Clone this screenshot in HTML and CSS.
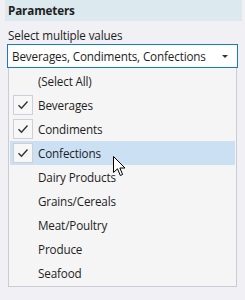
FILE: index.html
```html
<!DOCTYPE html>
<html lang="en">
<head>
    <meta charset="UTF-8">
    <title>Parameters</title>
    <link rel="stylesheet" href="styles.css">
</head>
<body>
<div class="panel">
    <div class="panel-title">Parameters</div>
    <div class="field-label">Select multiple values</div>
    <div class="select-box">
        <span class="select-text">Beverages, Condiments, Confections</span>
        <span class="select-arrow"></span>
    </div>
    <ul class="options">
        <li class="option"><span class="check empty"></span>(Select All)</li>
        <li class="option"><span class="check"><svg width="12" height="10" viewBox="0 0 12 10"><path d="M1.5 5.2 L4.5 8.2 L10.5 1.5" fill="none" stroke="#333" stroke-width="1.4"/></svg></span>Beverages</li>
        <li class="option"><span class="check"><svg width="12" height="10" viewBox="0 0 12 10"><path d="M1.5 5.2 L4.5 8.2 L10.5 1.5" fill="none" stroke="#333" stroke-width="1.4"/></svg></span>Condiments</li>
        <li class="option hover"><span class="check"><svg width="12" height="10" viewBox="0 0 12 10"><path d="M1.5 5.2 L4.5 8.2 L10.5 1.5" fill="none" stroke="#333" stroke-width="1.4"/></svg></span>Confections
            <svg class="cursor" width="14" height="21" viewBox="0 0 14 21"><path d="M0.5 0.5 L0.5 16.5 L4.5 12.8 L7.3 19.5 L9.6 18.5 L6.9 12 L12 12 Z" fill="#fff" stroke="#000" stroke-width="1"/></svg>
        </li>
        <li class="option"><span class="check empty"></span>Dairy Products</li>
        <li class="option"><span class="check empty"></span>Grains/Cereals</li>
        <li class="option"><span class="check empty"></span>Meat/Poultry</li>
        <li class="option"><span class="check empty"></span>Produce</li>
        <li class="option"><span class="check empty"></span>Seafood</li>
    </ul>
</div>
</body>
</html>
```
FILE: styles.css
```css
body {
    margin: 0;
    background-color: #f0f0f5;
    font-family: "Open Sans", "Noto Sans", sans-serif;
    font-size: 11.7px;
    letter-spacing: -0.15px;
    color: #1e1e1e;
}
.panel {
    width: 245px;
    height: 300px;
}
.panel-title {
    margin: 0 3px 0 5px;
    height: 21px;
    line-height: 21px;
    padding-left: 3px;
    background-color: #dce9ef;
    font-weight: bold;
    color: #1e1e1e;
}
.field-label {
    margin: 6px 0 0 8px;
    height: 17px;
    line-height: 17px;
}
.select-box {
    margin: 0 0 0 7px;
    width: 225px;
    height: 22px;
    border: 1px solid #1979ca;
    background-color: #fff;
    display: flex;
    align-items: center;
    padding-left: 4px;
    box-sizing: content-box;
}
.select-text {
    flex: 1;
}
.select-arrow {
    width: 0;
    height: 0;
    border-left: 3px solid transparent;
    border-right: 3px solid transparent;
    border-top: 3px solid #333;
    margin-right: 9px;
}
.options {
    list-style: none;
    margin: 0 0 0 8px;
    padding: 1px 1px;
    width: 225px;
    background-color: #f5f5f5;
    border: 1px solid #cbcbd6;
    border-top: none;
}
.option {
    height: 24px;
    display: flex;
    align-items: center;
    padding-left: 3px;
    position: relative;
}
.option.hover {
    background-color: #cce0f4;
}
.check {
    width: 18px;
    height: 18px;
    border: 1px solid #cfcfd8;
    background-color: #f7f7f7;
    margin-right: 5px;
    display: flex;
    align-items: center;
    justify-content: center;
}
.check.empty {
    visibility: hidden;
}
.cursor {
    position: absolute;
    left: 103px;
    top: 15px;
}
```
